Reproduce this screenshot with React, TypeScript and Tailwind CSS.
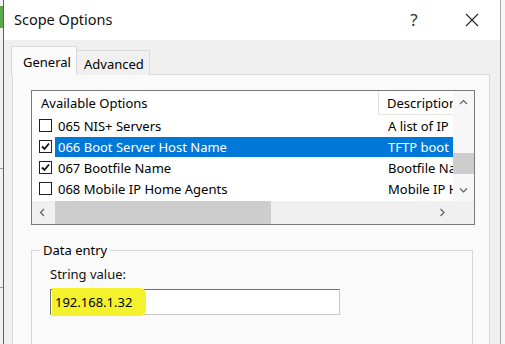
import React from "react";

const rows = [
  { id: "065 NIS+ Servers", desc: "A list of IP", checked: false, selected: false },
  { id: "066 Boot Server Host Name", desc: "TFTP boot", checked: true, selected: true },
  { id: "067 Bootfile Name", desc: "Bootfile Name", checked: true, selected: false },
  { id: "068 Mobile IP Home Agents", desc: "Mobile IP Home", checked: false, selected: false },
];

const CheckBox = ({ checked }: { checked: boolean }) => (
  <span className="w-[13px] h-[13px] shrink-0 border border-[#222] bg-white flex items-center justify-center">
    {checked && (
      <svg width="9" height="9" viewBox="0 0 9 9">
        <path d="M1 4.5 L3.5 7 L8 1.5" fill="none" stroke="#111" strokeWidth="1.8" />
      </svg>
    )}
  </span>
);

const Chevron = ({ dir }: { dir: "up" | "down" | "left" | "right" }) => {
  const d = {
    up: "M1 5 L4.5 1.5 L8 5",
    down: "M1 1.5 L4.5 5 L8 1.5",
    left: "M5 1 L1.5 4.5 L5 8",
    right: "M1.5 1 L5 4.5 L1.5 8",
  }[dir];
  const vertical = dir === "up" || dir === "down";
  return (
    <svg width={vertical ? 9 : 7} height={vertical ? 7 : 9} viewBox={vertical ? "0 0 9 7" : "0 0 7 9"}>
      <path d={d} fill="none" stroke="#606060" strokeWidth="1.2" />
    </svg>
  );
};

const App = () => {
  return (
    <div
      className="w-[505px] h-[344px] flex overflow-hidden bg-white text-black"
      style={{ fontFamily: '"Noto Sans", "Open Sans", sans-serif' }}
    >
      {/* background window peeking out */}
      <div className="w-[3px] shrink-0 flex flex-col bg-[#f3f3f3]">
        <div className="h-[22px] mt-[6px] bg-[#5aa84a]" />
        <div className="h-[120px] mt-[140px] border-y border-[#999]" />
      </div>

      {/* dialog */}
      <div className="w-[498px] shrink-0 flex flex-col border-l border-[#5f5f5f] border-r border-r-[#a8a8a8] bg-[#f0f0f0]">
        {/* title bar */}
        <div className="h-[40px] shrink-0 bg-white flex items-center">
          <span className="pl-[10px] text-[14.5px] text-[#111]">Scope Options</span>
          <span className="ml-auto w-[20px] text-center text-[17px] text-[#333] mr-[41px]">?</span>
          <span className="w-[14px] h-[14px] mr-[21px] flex">
            <svg width="14" height="14" viewBox="0 0 14 14">
              <path d="M1 1 L13 13 M13 1 L1 13" stroke="#222" strokeWidth="1.1" />
            </svg>
          </span>
        </div>

        {/* body */}
        <div className="flex-1 flex flex-col pt-[6px] pl-[7px] pr-[10px]">
          {/* tabs */}
          <div className="flex items-end h-[29px] relative z-10 -mb-px">
            <div className="h-[29px] w-[66px] bg-[#fbfbfb] border border-b-0 border-[#d9d9d9] pl-[11px] pt-[6px] text-[13px] leading-[18px]">
              General
            </div>
            <div className="h-[25px] w-[73px] bg-[#f0f0f0] border border-l-0 border-b-0 border-[#d9d9d9] pl-[7px] pt-[4px] text-[13px] leading-[18px]">
              Advanced
            </div>
          </div>

          {/* tab panel */}
          <div className="flex-1 ml-px bg-[#fafafa] border border-[#d9d9d9] pt-[15px] pl-[18px] pr-[12px]">
            {/* list view */}
            <div className="w-[444px] h-[135px] border border-[#7a7a7a] bg-white flex flex-col text-[13px]">
              <div className="flex h-[110px]">
                <div className="w-[421px] overflow-hidden flex flex-col">
                  {/* header */}
                  <div className="h-[24px] shrink-0 flex">
                    <div className="w-[347px] shrink-0 border-r border-[#e0e0e0] pl-[9px] leading-[24px]">
                      Available Options
                    </div>
                    <div className="flex-1 pl-[8px] leading-[24px] whitespace-nowrap overflow-hidden border-b border-[#e5e5e5]">
                      Description
                    </div>
                  </div>
                  {rows.map((r) => (
                    <div key={r.id} className="h-[21px] shrink-0 flex items-center">
                      <div className="w-[347px] shrink-0 flex items-center pl-[7px]">
                        <CheckBox checked={r.checked} />
                        <span
                          className={
                            r.selected
                              ? "flex-1 ml-[3px] pl-[3px] h-[20px] leading-[20px] bg-[#0078d7] text-white whitespace-nowrap"
                              : "flex-1 ml-[3px] pl-[3px] h-[20px] leading-[20px] whitespace-nowrap"
                          }
                        >
                          {r.id}
                        </span>
                      </div>
                      <div
                        className={
                          r.selected
                            ? "flex-1 pl-[9px] h-[20px] leading-[20px] bg-[#0078d7] text-white whitespace-nowrap overflow-hidden"
                            : "flex-1 pl-[9px] h-[20px] leading-[20px] whitespace-nowrap overflow-hidden"
                        }
                      >
                        {r.desc}
                      </div>
                    </div>
                  ))}
                </div>
                {/* vertical scrollbar */}
                <div className="w-[21px] shrink-0 bg-[#f7f7f7] flex flex-col">
                  <div className="h-[22px] flex items-center justify-center">
                    <Chevron dir="up" />
                  </div>
                  <div className="h-[40px]" />
                  <div className="h-[21px] bg-[#cdcdcd]" />
                  <div className="flex-1" />
                  <div className="h-[22px] flex items-center justify-center">
                    <Chevron dir="down" />
                  </div>
                </div>
              </div>
              {/* horizontal scrollbar */}
              <div className="flex-1 flex bg-[#f0f0f0]">
                <div className="w-[421px] flex items-center">
                  <div className="w-[21px] flex items-center justify-center">
                    <Chevron dir="left" />
                  </div>
                  <div className="w-[216px] ml-[2px] h-full bg-[#cdcdcd]" />
                  <div className="flex-1" />
                  <div className="w-[21px] flex items-center justify-center">
                    <Chevron dir="right" />
                  </div>
                </div>
                <div className="flex-1 bg-[#f0f0f0]" />
              </div>
            </div>

            {/* group box */}
            <div className="relative mt-[25px] w-[442px] h-[120px] border border-[#d5d5d5] pt-[14px] pl-[18px]">
              <span className="absolute -top-[11px] left-[8px] px-[3px] bg-[#fafafa] text-[13px] leading-[20px]">
                Data entry
              </span>
              <div className="text-[13px] leading-[18px] text-[#111]">String value:</div>
              <div className="mt-[6px] w-[290px] h-[26px] bg-white border border-[#c8c8c8] border-t-[#6f6f6f] border-l-[#6f6f6f] flex items-center pl-[1px]">
                <span className="bg-[#f4f22d] h-[28px] -my-px pl-[3px] pr-[14px] rounded-r-[6px] text-[13px] leading-[28px]">
                  192.168.1.32
                </span>
              </div>
            </div>
          </div>
        </div>
      </div>

      <div className="flex-1 bg-[#f7f7f7]" />
    </div>
  );
};

export default App;
